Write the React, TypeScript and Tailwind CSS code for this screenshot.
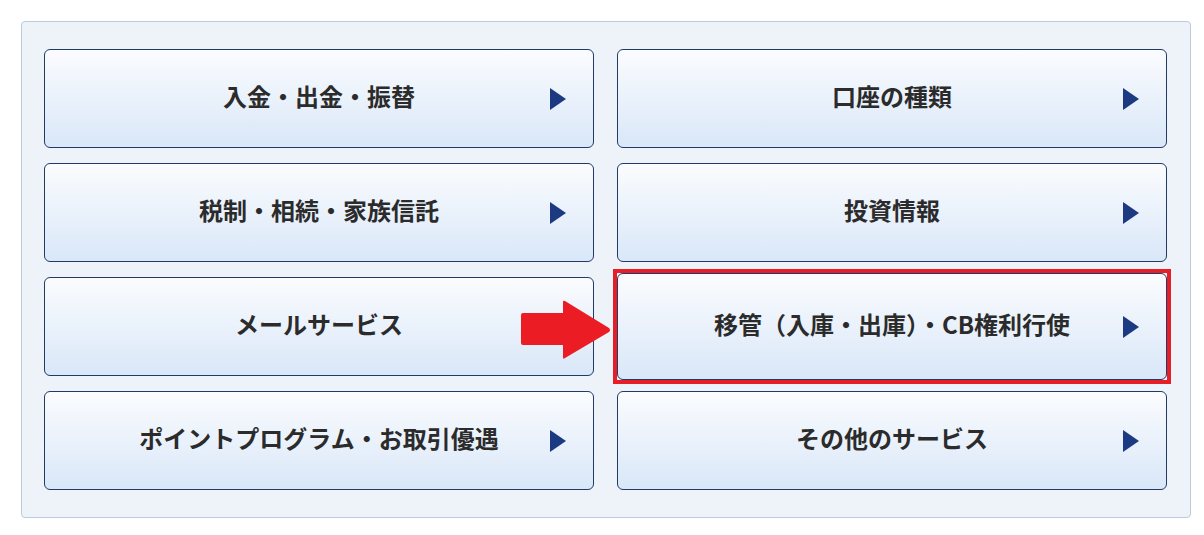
// App.tsx

type MenuItem = {
  label: string;
  highlight?: boolean;
};

const items: MenuItem[] = [
  { label: '入金・出金・振替' },
  { label: '口座の種類' },
  { label: '税制・相続・家族信託' },
  { label: '投資情報' },
  { label: 'メールサービス' },
  { label: '移管（入庫・出庫）・CB権利行使', highlight: true },
  { label: 'ポイントプログラム・お取引優遇' },
  { label: 'その他のサービス' },
];

const Triangle = () => (
  <svg width="16" height="22" viewBox="0 0 16 22" className="absolute right-[27px] top-1/2 -translate-y-1/2">
    <polygon points="0,0 16,11 0,22" fill="#1b3a82" />
  </svg>
);

const MenuButton = ({ label, highlight }: MenuItem) => (
  <button
    className={`relative flex items-center justify-center w-full rounded-[6px] border border-[#223a66] bg-gradient-to-b from-[#fbfcfe] to-[#d9e7f8] text-[24px] font-bold text-[#2b2b2b] ${
      highlight ? 'h-[107px] -mt-1' : 'h-full'
    }`}
    style={{ fontFamily: '"Noto Sans CJK JP", "Noto Sans", sans-serif' }}
  >
    <span className="leading-none -translate-y-[3px]">{label}</span>
    <Triangle />
    {/* marco rojo de resaltado */}
    {highlight && <span className="pointer-events-none absolute -inset-[5px] border-4 border-[#e61e28]" />}
  </button>
);

const App = () => {
  return (
    <div className="min-h-screen bg-white pl-[21px] pt-[21px]">
      <div className="relative w-[1170px] rounded-[4px] border border-[#bccbdd] bg-[#eef3fa] pl-[22px] pr-[23px] pt-[27px] pb-[27px]">
        <div className="grid grid-cols-[550px_550px] auto-rows-[99px] gap-x-[23px] gap-y-[15px]">
          {items.map((item) => (
            <div key={item.label} className="h-[99px]">
              <MenuButton {...item} />
            </div>
          ))}
        </div>

        {/* flecha roja apuntando al botón */}
        <svg
          width="94"
          height="62"
          viewBox="0 0 94 62"
          className="absolute left-[498px] top-[277px]"
        >
          <path
            d="M3 14 L43 14 L43 3 Q43 1 45 2 L89 29 Q91 31 89 33 L45 59 Q43 61 43 58 L43 46 L3 46 Q1 46 1 44 L1 16 Q1 14 3 14 Z"
            fill="#ec1c24"
          />
        </svg>
      </div>
    </div>
  );
};

export default App;
